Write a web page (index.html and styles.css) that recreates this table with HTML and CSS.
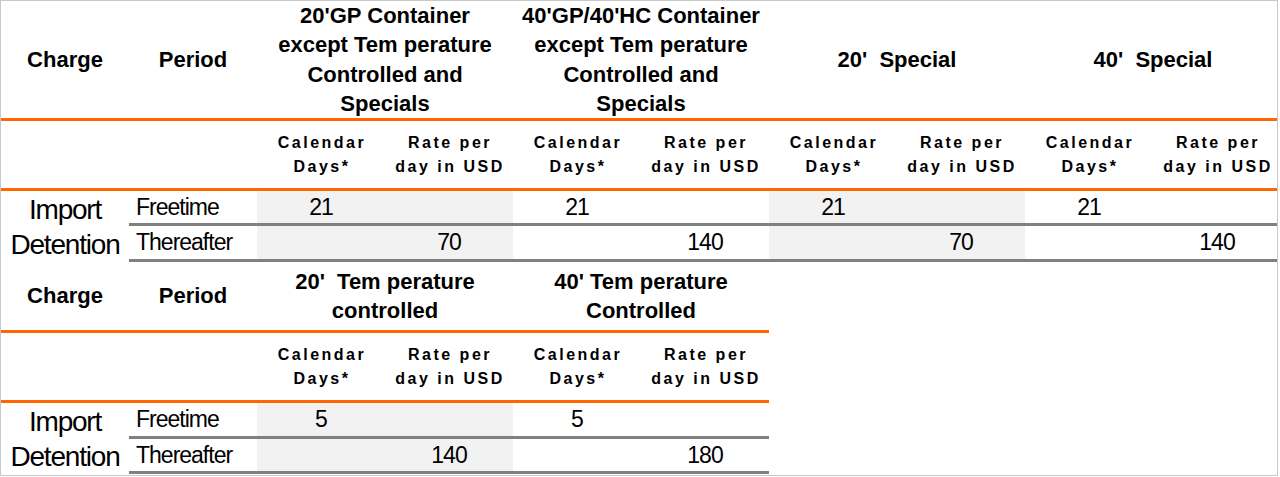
FILE: index.html
```html
<!DOCTYPE html>
<html>
<head>
<meta charset="utf-8">
<link rel="stylesheet" href="styles.css">
</head>
<body>
<div class="sheet">
  <div class="grid t1">
    <div class="c hd">Charge</div>
    <div class="c hd">Period</div>
    <div class="c hd span2">20'GP Container<br>except Tem perature<br>Controlled and<br>Specials</div>
    <div class="c hd span2">40'GP/40'HC Container<br>except Tem perature<br>Controlled and<br>Specials</div>
    <div class="c hd span2">20'&nbsp; Special</div>
    <div class="c hd span2">40'&nbsp; Special</div>

    <div class="c sh"></div>
    <div class="c sh"></div>
    <div class="c sh">Calendar<br>Days*</div>
    <div class="c sh">Rate per<br>day in USD</div>
    <div class="c sh">Calendar<br>Days*</div>
    <div class="c sh">Rate per<br>day in USD</div>
    <div class="c sh">Calendar<br>Days*</div>
    <div class="c sh">Rate per<br>day in USD</div>
    <div class="c sh">Calendar<br>Days*</div>
    <div class="c sh">Rate per<br>day in USD</div>

    <div class="c charge">Import<br>Detention</div>
    <div class="c period">Freetime</div>
    <div class="c val shade">21</div>
    <div class="c val shade"></div>
    <div class="c val">21</div>
    <div class="c val"></div>
    <div class="c val shade">21</div>
    <div class="c val shade"></div>
    <div class="c val">21</div>
    <div class="c val"></div>

    <div class="c period">Thereafter</div>
    <div class="c val shade"></div>
    <div class="c val shade">70</div>
    <div class="c val"></div>
    <div class="c val">140</div>
    <div class="c val shade"></div>
    <div class="c val shade">70</div>
    <div class="c val"></div>
    <div class="c val">140</div>
  </div>

  <div class="grid t2">
    <div class="c hd">Charge</div>
    <div class="c hd">Period</div>
    <div class="c hd span2">20'&nbsp; Tem perature<br>controlled</div>
    <div class="c hd span2">40' Tem perature<br>Controlled</div>

    <div class="c sh"></div>
    <div class="c sh"></div>
    <div class="c sh">Calendar<br>Days*</div>
    <div class="c sh">Rate per<br>day in USD</div>
    <div class="c sh">Calendar<br>Days*</div>
    <div class="c sh">Rate per<br>day in USD</div>

    <div class="c charge">Import<br>Detention</div>
    <div class="c period">Freetime</div>
    <div class="c val shade">5</div>
    <div class="c val shade"></div>
    <div class="c val">5</div>
    <div class="c val"></div>

    <div class="c period">Thereafter</div>
    <div class="c val shade"></div>
    <div class="c val shade">140</div>
    <div class="c val"></div>
    <div class="c val">180</div>
  </div>
</div>
</body>
</html>
```

FILE: styles.css
```css
html, body {
  margin: 0;
  padding: 0;
  background: #ffffff;
}

.sheet {
  width: 1278px;
  height: 476px;
  border: 1px solid #c8c8c8;
  box-sizing: border-box;
  overflow: hidden;
  font-family: "Liberation Sans", Arial, sans-serif;
  color: #000000;
}

.grid {
  display: grid;
}

.t1 {
  grid-template-columns: repeat(10, 128px);
  grid-template-rows: 120px 70px 35px 36px;
}

.t2 {
  width: 768px;
  grid-template-columns: repeat(6, 128px);
  grid-template-rows: 71px 70px 36px 35px;
}

.c {
  display: flex;
  align-items: center;
  justify-content: center;
  text-align: center;
  box-sizing: border-box;
  white-space: nowrap;
}

.span2 {
  grid-column: span 2;
}

.hd {
  border-bottom: 3px solid #ff6600;
  font-weight: bold;
  font-size: 22px;
  line-height: 29.5px;
}

.sh {
  border-bottom: 3px solid #ff6600;
  font-weight: bold;
  font-size: 16px;
  line-height: 24px;
  letter-spacing: 2.5px;
  padding-left: 2px;
}

.charge {
  grid-row: span 2;
  font-size: 28px;
  line-height: 35px;
  letter-spacing: -1.2px;
}

.period {
  justify-content: flex-start;
  padding-left: 7px;
  border-bottom: 3px solid #808080;
  font-size: 23px;
  letter-spacing: -1px;
}

.val {
  border-bottom: 3px solid #808080;
  font-size: 23px;
  letter-spacing: -1px;
}

.shade {
  background: #f2f2f2;
}
```
